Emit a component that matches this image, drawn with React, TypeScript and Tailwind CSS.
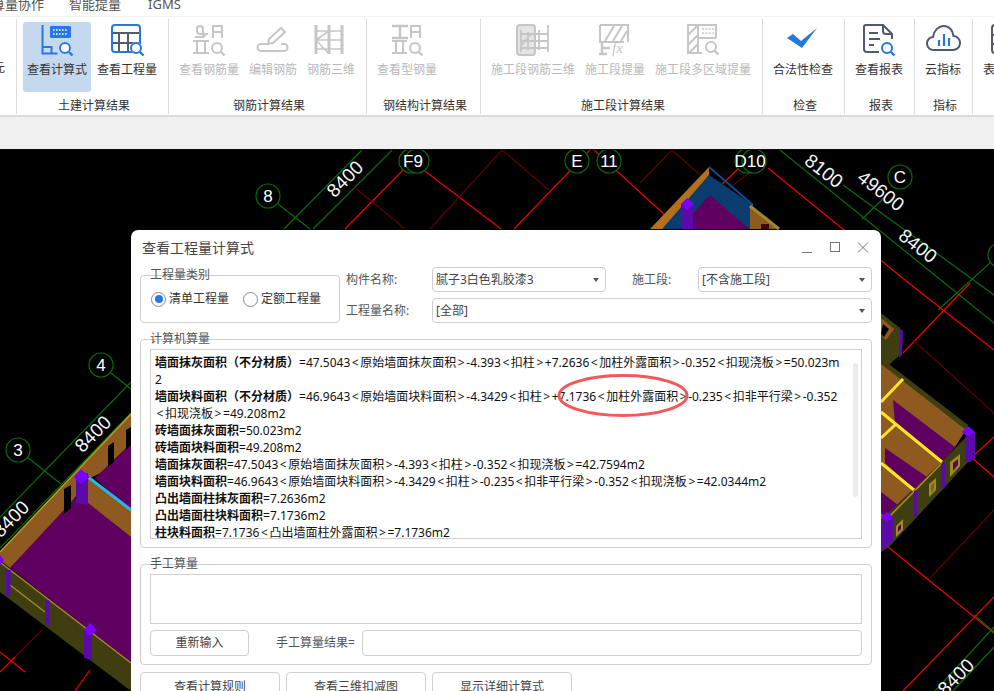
import type { ReactNode } from 'react'

const BLUE = '#2677e2'
const SLATE = '#4f5a70'
const GREY = '#c6c6c6'

function Lens({ x = 26, y = 24, c = GREY, r = 5 }: { x?: number; y?: number; c?: string; r?: number }) {
  return (
    <g>
      <circle cx={x} cy={y} r={r + 1} fill="#fff" />
      <circle cx={x} cy={y} r={r} fill="none" stroke={c} strokeWidth="2" />
      <path d={`M${x + r - 1} ${y + r - 1}l3.5 3.5`} stroke={c} strokeWidth="2.4" />
    </g>
  )
}

function Ico({ children }: { children: ReactNode }) {
  return (
    <svg width="36" height="32" viewBox="0 0 36 32" fill="none" className="mx-auto shrink-0">
      {children}
    </svg>
  )
}

const FormulaIcon = () => (
  <Ico>
    <path d="M3.5 1v28.5h15M3.5 23h9v6.5" stroke={BLUE} strokeWidth="2" />
    <rect x="11" y="2" width="21" height="12" rx="1" fill={BLUE} />
    <path d="M14 6h15M14 10h15" stroke="#fff" strokeWidth="1.4" strokeDasharray="1.6 1.4" />
    <Lens c={BLUE} />
  </Ico>
)

const GridIcon = () => (
  <Ico>
    <path d="M10 9v19M19 9v19M3 9h28M3 19h28" stroke="#555c68" strokeWidth="2" />
    <rect x="3" y="1" width="28" height="27" rx="3" stroke={BLUE} strokeWidth="2" />
    <Lens x={27} y={24} c={BLUE} />
  </Ico>
)

const RebarIcon = () => (
  <Ico>
    <path d="M6 5a3 3 0 0 1 6 0v9M6 5v2a3 3 0 0 0 3 3h8M14 10a3 3 0 0 1-3 3H4" stroke={GREY} strokeWidth="2" />
    <path d="M22 14V2h9v12M22 8h9" stroke={GREY} strokeWidth="2" />
    <path d="M2 17h16M2 29h16M6 17v12M14 17v12" stroke={GREY} strokeWidth="2" />
    <Lens />
  </Ico>
)

const EditBarIcon = () => (
  <Ico>
    <path d="M13 20h-7a3.5 3.5 0 0 0 0 7h23a3.5 3.5 0 0 0 0-7h-3" stroke={GREY} strokeWidth="2" />
    <path d="M13 20l1-5L26 4l4 4-12 11z" stroke={GREY} strokeWidth="2" />
  </Ico>
)

const Rebar3dIcon = () => (
  <Ico>
    <path d="M3 1v29M16 1v29M29 1v29" stroke={GREY} strokeWidth="3" />
    <path d="M3 7h26M3 16h26M3 25h26M3 16L16 7M3 16l13 14" stroke={GREY} strokeWidth="1.6" />
  </Ico>
)

const SteelIcon = () => (
  <Ico>
    <path d="M3 2h16M3 14h16M11 2v12" stroke={GREY} strokeWidth="2.4" />
    <path d="M22 14V2h9v12M22 8h9" stroke={GREY} strokeWidth="2" />
    <path d="M3 17h15M3 29h15M7 17v12M14 17v12" stroke={GREY} strokeWidth="2" />
    <Lens />
  </Ico>
)

const Stage3dIcon = () => (
  <Ico>
    <rect x="2" y="1" width="18" height="30" rx="3" fill="#e4e4e4" stroke={GREY} strokeWidth="2" />
    <path d="M6 6v22M13 8v18M24 6v20M33 1v27M6 10h27M6 17h27M6 24h27M6 22L16 10" stroke={GREY} strokeWidth="1.8" />
  </Ico>
)

const StageFxIcon = () => (
  <Ico>
    <path d="M3 1h28v17M3 1v17h24M8 17L17 2M16 17L25 2M24 17l6-10" stroke={GREY} strokeWidth="2" />
    <path d="M5 18v12M2 30h8M5 24h8" stroke={GREY} strokeWidth="2.4" />
    <text x="15" y="29" fill={GREY} fontSize="15" fontStyle="italic" fontFamily="'Liberation Serif', serif">fx</text>
  </Ico>
)

const StageAreaIcon = () => (
  <Ico>
    <path d="M17 29H3V1h28v13" stroke={GREY} strokeWidth="2" />
    <path d="M3 11L12 2M3 21L13 11M5 28L13 20M13 1v28M13 14h18" stroke={GREY} strokeWidth="2" />
    <path d="M17 5h12M17 9h12" stroke={GREY} strokeWidth="1.6" strokeDasharray="2 1.4" />
    <Lens y={23} x={26} />
  </Ico>
)

const CheckIcon = () => (
  <Ico>
    <path d="M2 14l6-4 8 7L32 4 17 24z" fill={BLUE} />
  </Ico>
)

const ReportIcon = () => (
  <Ico>
    <path d="M18 28H6a3 3 0 0 1-3-3V3a2 2 0 0 1 2-2h17l9 9v5M22 1v6a3 3 0 0 0 3 3h6" stroke={SLATE} strokeWidth="2" />
    <path d="M8 9h9M8 15h11M8 21h5" stroke={SLATE} strokeWidth="2" />
    <circle cx="26" cy="24" r="5" fill="#a9cdf8" />
    <Lens c={BLUE} />
  </Ico>
)

const CloudIcon = () => (
  <Ico>
    <path
      d="M9 26a6.5 6.5 0 0 1-1-13C9 6 14 2 18.500 2 24 2 28 6 28.500 12a7 7 0 0 1-1 14z"
      stroke={SLATE}
      strokeWidth="2"
    />
    <path d="M14 16v6M19 10v12M24 14v8" stroke={BLUE} strokeWidth="2.2" />
  </Ico>
)

const TableIcon = () => (
  <Ico>
    <rect x="3" y="1" width="28" height="28" rx="3" stroke={SLATE} strokeWidth="2" />
    <path d="M3 11h28M3 20h28" stroke={SLATE} strokeWidth="2" />
  </Ico>
)

function Item({ icon, label, w, on, off }: { icon: ReactNode; label: string; w: string; on?: boolean; off?: boolean }) {
  return (
    <div className={`${w} h-[70px] pt-[2px] rounded-[3px] shrink-0 ${on ? 'bg-[#c4d9f0]' : ''}`}>
      {icon}
      <div className={`mt-[6px] text-center text-[12px] leading-[16px] whitespace-nowrap ${off ? 'text-[#b9b9b9]' : 'text-[#333]'}`}>
        {label}
      </div>
    </div>
  )
}

function Group({ w, pl, label, children }: { w: string; pl: string; label: string; children: ReactNode }) {
  return (
    <div className={`${w} shrink-0 h-[95px] mt-[2px] pt-[3px] border-r border-[#dcdcdc]`}>
      <div className={`flex ${pl}`}>{children}</div>
      <div className="mt-[6px] pl-[3px] text-center text-[12px] leading-[16px] text-[#333] whitespace-nowrap">{label}</div>
    </div>
  )
}

function Ribbon() {
  return (
    <div className="flex h-[101px] border-b-2 border-t border-b-[#dcdcdc] border-t-[#f2f2f2] bg-white overflow-hidden">
      <div className="w-[17px] shrink-0 h-[95px] mt-[2px] border-r border-[#dcdcdc] overflow-hidden">
        <div className="mt-[41px] -ml-[7px] text-[12px] leading-[16px] text-[#333]">元</div>
      </div>
      <Group w="w-[152px]" pl="pl-[6px]" label="土建计算结果">
        <Item w="w-[68px]" on icon={<FormulaIcon />} label="查看计算式" />
        <Item w="w-[72px]" icon={<GridIcon />} label="查看工程量" />
      </Group>
      <Group w="w-[198px]" pl="pl-[5px]" label="钢筋计算结果">
        <Item w="w-[70px]" off icon={<RebarIcon />} label="查看钢筋量" />
        <Item w="w-[58px]" off icon={<EditBarIcon />} label="编辑钢筋" />
        <Item w="w-[58px]" off icon={<Rebar3dIcon />} label="钢筋三维" />
      </Group>
      <Group w="w-[114px]" pl="pl-[5px]" label="钢结构计算结果">
        <Item w="w-[70px]" off icon={<SteelIcon />} label="查看型钢量" />
      </Group>
      <Group w="w-[282px]" pl="pl-[5px]" label="施工段计算结果">
        <Item w="w-[94px]" off icon={<Stage3dIcon />} label="施工段钢筋三维" />
        <Item w="w-[70px]" off icon={<StageFxIcon />} label="施工段提量" />
        <Item w="w-[106px]" off icon={<StageAreaIcon />} label="施工段多区域提量" />
      </Group>
      <Group w="w-[82px]" pl="pl-[5px]" label="检查">
        <Item w="w-[70px]" icon={<CheckIcon />} label="合法性检查" />
      </Group>
      <Group w="w-[70px]" pl="pl-[5px]" label="报表">
        <Item w="w-[58px]" icon={<ReportIcon />} label="查看报表" />
      </Group>
      <Group w="w-[58px]" pl="pl-[5px]" label="指标">
        <Item w="w-[46px]" icon={<CloudIcon />} label="云指标" />
      </Group>
      <Group w="w-[70px]" pl="pl-[10px]" label="表格">
        <Item w="w-[48px]" icon={<TableIcon />} label="表格输出" />
      </Group>
    </div>
  )
}

const G = '#0a6b0a'
const R = '#f00000'
const D = '#5e0000'
const cadLines: [number, number, number, number, string][] = [
  [0, 517, 131, 382, G], [0, 548, 131, 413, G], [111, 373, 131, 389, G], [27, 457, 61, 484, G],
  [278, 204, 310, 229, G], [284, 229, 362, 150, G], [313, 229, 392, 150, G],
  [345, 229, 408, 165, R], [417, 165, 501, 229, R], [353, 186, 405, 229, D], [430, 229, 502, 150, D],
  [502, 150, 549, 190, D], [514, 229, 590, 150, R], [594, 150, 680, 229, R],
  [672, 150, 640, 183, D], [672, 150, 747, 217, D], [740, 167, 683, 222, R], [757, 167, 713, 200, D],
  [768, 168, 905, 280, R], [780, 150, 994, 323, G], [843, 185, 994, 295, G],
  [862, 219, 885, 197, G], [938, 310, 990, 263, G],
  [905, 280, 994, 350, R], [903, 353, 970, 283, R], [913, 340, 994, 413, D], [972, 457, 994, 437, R],
  [972, 458, 994, 477, R], [930, 578, 994, 510, D], [888, 547, 994, 633, R], [903, 691, 994, 597, R],
  [974, 615, 994, 632, G], [935, 691, 994, 627, G], [953, 691, 994, 647, G],
  [0, 652, 25, 672, R], [0, 672, 15, 657, R], [15, 657, 42, 630, D], [75, 691, 90, 670, R],
  [15, 518, 22, 524, D],
]

function Bubble({ x, y, t }: { x: number; y: number; t: string }) {
  return (
    <g>
      <circle cx={x} cy={y} r="12" fill="#000" stroke={G} strokeWidth="1.2" />
      <text x={x} y={y + 6} fontSize="17" fill="#fff" textAnchor="middle" fontFamily="'Liberation Sans', sans-serif">{t}</text>
    </g>
  )
}

function Dim({ x, y, a, t = '8400' }: { x: number; y: number; a: number; t?: string }) {
  return (
    <text
      x={x}
      y={y}
      fontSize="19"
      fill="#f4f4f4"
      textAnchor="middle"
      dominantBaseline="middle"
      transform={`rotate(${a} ${x} ${y})`}
      fontFamily="'Liberation Sans', sans-serif"
    >
      {t}
    </text>
  )
}

function Poly({ p, f }: { p: string; f: string }) {
  return <polygon points={p} fill={f} />
}

const BROWN = '#8e5a20'
const PURPLE = '#5f0060'
const OLIVE = '#3e3e10'
const CAP = '#7a00ff'
const COL = '#5a0aa8'
const YEL = '#ffe528'

function CadCanvas() {
  return (
    <svg viewBox="0 150 994 541" width="994" height="541" className="block bg-black">
      {cadLines.map(([a, b, c, d, s], i) => (
        <line key={i} x1={a} y1={b} x2={c} y2={d} stroke={s} strokeWidth="1.200" />
      ))}

      {/* left block */}
      <Poly p="0,552 131,414 131,445 107,470 90,478 63,513 10,568 0,560" f={BROWN} />
      <path d="M0 552L131 414" stroke="#b59b2c" strokeWidth="1.500" />
      <Poly p="10,568 75,498 88,503 131,537 131,663" f={PURPLE} />
      <Poly p="95,478 131,443 131,513" f={PURPLE} />
      <Poly p="88,478 131,510 131,537 88,503" f={BROWN} />
      <path d="M88 477L131 510" stroke="#22b8e8" strokeWidth="3" />
      <Poly p="64,489 71,485 71,508 64,514" f="#000" />
      <Poly p="108,446 114,442 114,462 108,467" f="#000" />
      <Poly p="126,430 131,427 131,445 126,450" f="#000" />
      <Poly p="76,475 88,473 88,505 76,503" f={COL} />
      <Poly p="81,469 90,477 81,484 74,477" f={CAP} />
      <Poly p="0,562 131,663 131,691 0,592" f={OLIVE} />
      <path d="M0 562L131 663M10 585L45 612" stroke="#a08a26" strokeWidth="1.500" />
      <Poly p="6,570 11,570 10,597 6,595" f={COL} />
      <Poly p="45,600 49,600 49,626 45,623" f={COL} />
      <Poly p="84,630 92,632 92,660 84,658" f={COL} />
      <Poly p="90,623 97,630 90,636 84,630" f={CAP} />
      <Poly p="0,555 4,560 0,565" f={CAP} />

      {/* top block */}
      <Poly p="660,229 709,175 753,205 750,229" f="#0a3c70" />
      <Poly p="650,229 709,167 709,175 662,229" f="#b4701e" />
      <path d="M709 167L753 205" stroke="#0a4c90" strokeWidth="2" />
      <Poly p="710,195 749,229 679,229" f={PURPLE} />
      <Poly p="681,204 693,204 693,229 681,229" f={COL} />
      <Poly p="687,198 694,204 687,210 681,204" f={CAP} />
      <Poly p="750,207 779,229 750,229" f={BROWN} />
      <path d="M750 206L779 229" stroke="#a08a26" strokeWidth="3" />
      <rect x="761" y="224" width="8" height="5" fill="#3a0a0a" />

      {/* right block */}
      <Poly p="881,313 900,328 900,355 881,372" f={OLIVE} />
      <Poly p="881,318 894,329 886,340 881,335" f={BROWN} />
      <Poly p="883,324 889,329 884,337 881,334" f="#000" />
      <Poly p="899,328 903,331 902,355 899,358" f={COL} />
      <Poly p="881,358 968,425 966,431 881,366" f={OLIVE} />
      <Poly p="881,364 966,430 955,447 942,462 881,520" f={BROWN} />
      <Poly p="893,400 955,447 942,462 895,423" f={PURPLE} />
      <Poly p="885,448 927,477 915,490 885,463" f={PURPLE} />
      <Poly p="881,492 898,505 885,517 881,513" f={PURPLE} />
      <Poly p="881,520 942,462 966,437 968,462 889,547 881,552" f={OLIVE} />
      <path d="M881 402L903 379M881 412L942 462M881 438L895 425M881 463L914 490" stroke={YEL} strokeWidth="3" />
      <path d="M942 463L889 517" stroke="#b08a2a" strokeWidth="1.500" />
      <Poly p="950,462 960,454 960,466 950,477" f="#a08a26" />
      <Poly p="953,463 958,459 958,465 953,471" f={PURPLE} />
      <Poly p="929,484 936,478 936,490 929,497" f="#a08a26" />
      <Poly p="931,485 934,483 934,489 931,493" f={BROWN} />
      <Poly p="896,526 903,519 903,530 896,537" f="#a08a26" />
      <Poly p="898,527 901,524 901,529 898,532" f={PURPLE} />
      <Poly p="941,464 945,462 945,487 941,491" f={COL} />
      <Poly p="914,491 917,490 917,514 914,517" f={COL} />
      <Poly p="965,437 975,432 975,458 970,462 965,462" f={COL} />
      <Poly p="968,426 975,432 968,437 962,432" f={CAP} />
      <Poly p="881,522 893,517 893,540 881,552" f={COL} />
      <Poly p="887,512 893,517 887,522 881,517" f={CAP} />

      <Bubble x={101} y={365} t="4" />
      <Bubble x={18} y={450} t="3" />
      <Bubble x={268} y={196} t="8" />
      <Bubble x={411} y={161} t="" />
      <Bubble x={417} y={161} t="" />
      <text x="413" y="167" fontSize="17" fill="#fff" textAnchor="middle" fontFamily="'Liberation Sans', sans-serif">F9</text>
      <Bubble x={577} y={161} t="E" />
      <Bubble x={609} y={161} t="11" />
      <Bubble x={747} y={161} t="" />
      <Bubble x={754} y={161} t="" />
      <text x="750" y="167" fontSize="17" fill="#fff" textAnchor="middle" fontFamily="'Liberation Sans', sans-serif">D10</text>
      <Bubble x={900} y={177} t="C" />
      <Bubble x={1000} y={255} t="E" />

      <Dim x={94} y={435} a={-45} />
      <Dim x={12} y={520} a={-45} />
      <Dim x={346} y={180} a={-45} />
      <Dim x={823} y={172} a={38} t="8100" />
      <Dim x={880} y={192} a={38} t="49600" />
      <Dim x={917} y={247} a={38} />
      <Dim x={957} y={678} a={-45} />
    </svg>
  )
}

function Legend({ children }: { children: ReactNode }) {
  return <span className="absolute left-[9px] -top-[9px] text-[12px] leading-[16px] text-[#555]">{children}</span>
}

function Radio({ label, on }: { label: string; on?: boolean }) {
  return (
    <div className="flex items-center gap-[3px] text-[12px] text-[#333]">
      <span className={`w-[15px] h-[15px] rounded-full border flex items-center justify-center ${on ? 'border-[#7d8a9a]' : 'border-[#888]'}`}>
        {on && <span className="w-[8px] h-[8px] rounded-full bg-[#2878e0]" />}
      </span>
      {label}
    </div>
  )
}

function Dropdown({ value, className }: { value: string; className: string }) {
  return (
    <div className={`${className} h-[25px] flex items-center justify-between pl-[3px] pr-[6px] border border-[#cfcfcf] rounded-[4px] text-[12px] text-[#444]`}>
      <span>{value}</span>
      <span className="w-0 h-0 border-x-[3px] border-x-transparent border-t-[4px] border-t-[#555]" />
    </div>
  )
}

const formula: [string, string][] = [
  ['墙面抹灰面积（不分材质）', '=47.5043<原始墙面抹灰面积>-4.393<扣柱>+7.2636<加柱外露面积>-0.352<扣现浇板>=50.023m'],
  ['', '2'],
  ['墙面块料面积（不分材质）', '=46.9643<原始墙面块料面积>-4.3429<扣柱>+7.1736<加柱外露面积>-0.235<扣非平行梁>-0.352'],
  ['', '<扣现浇板>=49.208m2'],
  ['砖墙面抹灰面积', '=50.023m2'],
  ['砖墙面块料面积', '=49.208m2'],
  ['墙面抹灰面积', '=47.5043<原始墙面抹灰面积>-4.393<扣柱>-0.352<扣现浇板>=42.7594m2'],
  ['墙面块料面积', '=46.9643<原始墙面块料面积>-4.3429<扣柱>-0.235<扣非平行梁>-0.352<扣现浇板>=42.0344m2'],
  ['凸出墙面柱抹灰面积', '=7.2636m2'],
  ['凸出墙面柱块料面积', '=7.1736m2'],
  ['柱块料面积', '=7.1736<凸出墙面柱外露面积>=7.1736m2'],
]

// the angle brackets sit wider in the reference's font than in Noto Sans
function FormulaText({ text }: { text: string }) {
  return (
    <>
      {text.split(/([<>])/).map((part, i) =>
        part === '<' || part === '>' ? (
          <span key={i} className="inline-block w-[10px] text-center">{part}</span>
        ) : (
          <span key={i}>{part}</span>
        ),
      )}
    </>
  )
}

function Btn({ children, className }: { children: ReactNode; className: string }) {
  return (
    <div className={`${className} flex items-center justify-center border border-[#cfcfcf] rounded-[4px] text-[12px] text-[#444]`}>
      {children}
    </div>
  )
}

function Dialog() {
  return (
    <div className="absolute left-[131px] top-[80px] w-[750px] h-[520px] bg-white rounded-t-[7px]">
      <div className="h-[37px] flex items-center justify-between pl-[11px] pr-[10px] pt-[1px]">
        <span className="text-[14px] text-[#444] -mt-[4px]">查看工程量计算式</span>
        <svg width="70" height="14" viewBox="0 0 70 14" fill="none" stroke="#777" className="-mt-[2px]">
          <path d="M1 11.500h10" />
          <rect x="29.500" y="1.500" width="9" height="9" />
          <path d="M57 1.500l10 10M67 1.500l-10 10" />
        </svg>
      </div>
      <div className="pl-[9px] pr-[9px]">
        <div className="flex gap-[6px]">
          <div className="relative mt-[8px] w-[200px] h-[48px] shrink-0 border border-[#cfcfcf] rounded-[4px] flex items-center gap-[14px] pl-[10px]">
            <Legend>工程量类别</Legend>
            <Radio on label="清单工程量" />
            <Radio label="定额工程量" />
          </div>
          <div className="flex-1 flex flex-col gap-[6px] text-[12px] text-[#555]">
            <div className="flex items-center">
              <span className="w-[86px]">构件名称:</span>
              <Dropdown className="w-[174px]" value="腻子3白色乳胶漆3" />
              <span className="w-[66px] ml-[26px]">施工段:</span>
              <Dropdown className="flex-1" value="[不含施工段]" />
            </div>
            <div className="flex items-center">
              <span className="w-[86px]">工程量名称:</span>
              <Dropdown className="flex-1" value="[全部]" />
            </div>
          </div>
        </div>

        <div className="relative mt-[16px] h-[209px] border border-[#cfcfcf] rounded-[4px] pt-[9px] pl-[9px] pr-[9px]">
          <Legend>计算机算量</Legend>
          <div className="relative h-[190px] border border-[#cfcfcf] pl-[4px] pt-[4px] overflow-hidden text-[12px] leading-[17px] text-[#111]">
            {formula.map(([b, r], i) => (
              <div key={i} className="whitespace-nowrap">
                <span className="font-bold">{b}</span>
                <FormulaText text={r} />
              </div>
            ))}
            <div className="absolute right-[3px] top-[13px] w-[5px] h-[134px] rounded bg-[#ececec]" />
          </div>
        </div>

        <div className="relative mt-[16px] h-[101px] border border-[#cfcfcf] rounded-[4px] pt-[9px] pl-[9px] pr-[9px]">
          <Legend>手工算量</Legend>
          <div className="h-[50px] border border-[#cfcfcf]" />
          <div className="mt-[6px] flex items-center">
            <Btn className="w-[99px] h-[26px]">重新输入</Btn>
            <span className="ml-[27px] w-[86px] text-[12px] text-[#555] whitespace-nowrap">手工算量结果=</span>
            <div className="flex-1 h-[26px] border border-[#cfcfcf] rounded-[4px]" />
          </div>
        </div>

        <div className="mt-[7px] flex gap-[6px]">
          <Btn className="w-[140px] h-[30px]">查看计算规则</Btn>
          <Btn className="w-[140px] h-[30px]">查看三维扣减图</Btn>
          <Btn className="w-[140px] h-[30px]">显示详细计算式</Btn>
        </div>
      </div>

      <svg width="134" height="46" viewBox="0 0 134 46" fill="none" className="absolute left-[425px] top-[143px]">
        <ellipse cx="67" cy="22.500" rx="64" ry="20" stroke="#f25a5a" strokeWidth="3" />
      </svg>
    </div>
  )
}

export default function App() {
  return (
    <div className="w-[994px] h-[691px] overflow-hidden bg-white font-['Noto_Sans','Noto_Sans_CJK_SC',sans-serif]">
      <div className="h-[16px] overflow-hidden flex gap-[25px] -ml-[8px] text-[13px] leading-[16px] text-[#555]">
        <span className="-mt-[4px]">算量协作</span>
        <span className="-mt-[4px]">智能提量</span>
        <span className="-mt-[4px] ml-[2px]">IGMS</span>
      </div>
      <Ribbon />
      <div className="h-[32px] bg-[#f0f0f0]" />
      <div className="relative h-[542px] border-t border-[#111] overflow-hidden">
        <CadCanvas />
        <Dialog />
      </div>
    </div>
  )
}
